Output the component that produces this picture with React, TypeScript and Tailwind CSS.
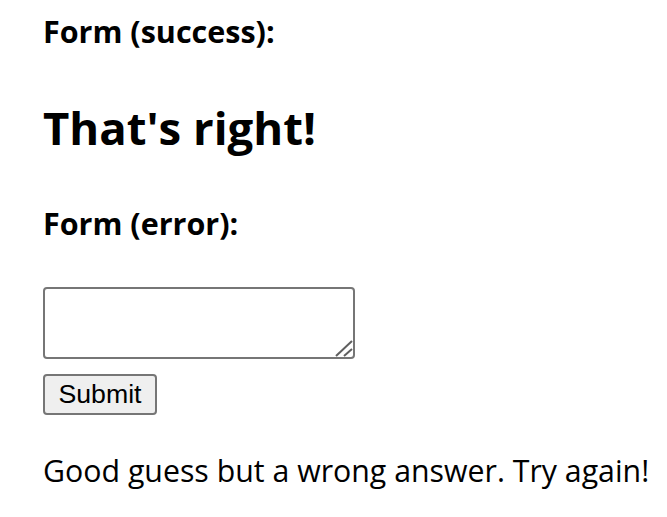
import { FC } from "react";

const sans = { fontFamily: '"Open Sans", "Noto Sans", sans-serif' };

const Grip: FC = () => (
    <svg
        className="absolute right-0 bottom-0 w-5 h-5 pointer-events-none"
        viewBox="0 0 20 20"
    >
        <line x1="1" y1="17" x2="17" y2="2" stroke="#5f5f5f" strokeWidth="2" />
        <line x1="9" y1="17" x2="17" y2="10" stroke="#5f5f5f" strokeWidth="2" />
    </svg>
);

const App: FC = () => {
    return (
        <div className="bg-white text-black min-h-[517px] pl-[43px] flex flex-col items-start font-['Open_Sans','Noto_Sans',sans-serif]">
            <h4 className="mt-[11px] text-[30.5px] leading-[40px] font-bold">
                Form (success):
            </h4>
            <h2 className="mt-[44px] text-[45.5px] leading-[64px] font-bold">
                That's right!
            </h2>
            <h4 className="mt-[44px] text-[30.5px] leading-[40px] font-bold">
                Form (error):
            </h4>
            <form className="flex flex-col items-start">
                <div className="relative mt-[44px] w-[312px] h-[72px]">
                    <textarea className="block w-full h-full resize-none border-2 border-[#767676] rounded-[4px] bg-white outline-none" />
                    <Grip />
                </div>
                <button
                    type="button"
                    className="mt-[15px] w-[114px] h-[41px] bg-[#efefef] border-2 border-[#767676] rounded-[4px] text-[26.7px] leading-none text-black font-['Liberation_Sans',Arial,sans-serif]"
                >
                    Submit
                </button>
            </form>
            <p
                className="mt-[36px] text-[30.3px] leading-[40px] whitespace-nowrap"
                style={sans}
            >
                Good guess but a wrong answer. Try again!
            </p>
        </div>
    );
};

export default App;
